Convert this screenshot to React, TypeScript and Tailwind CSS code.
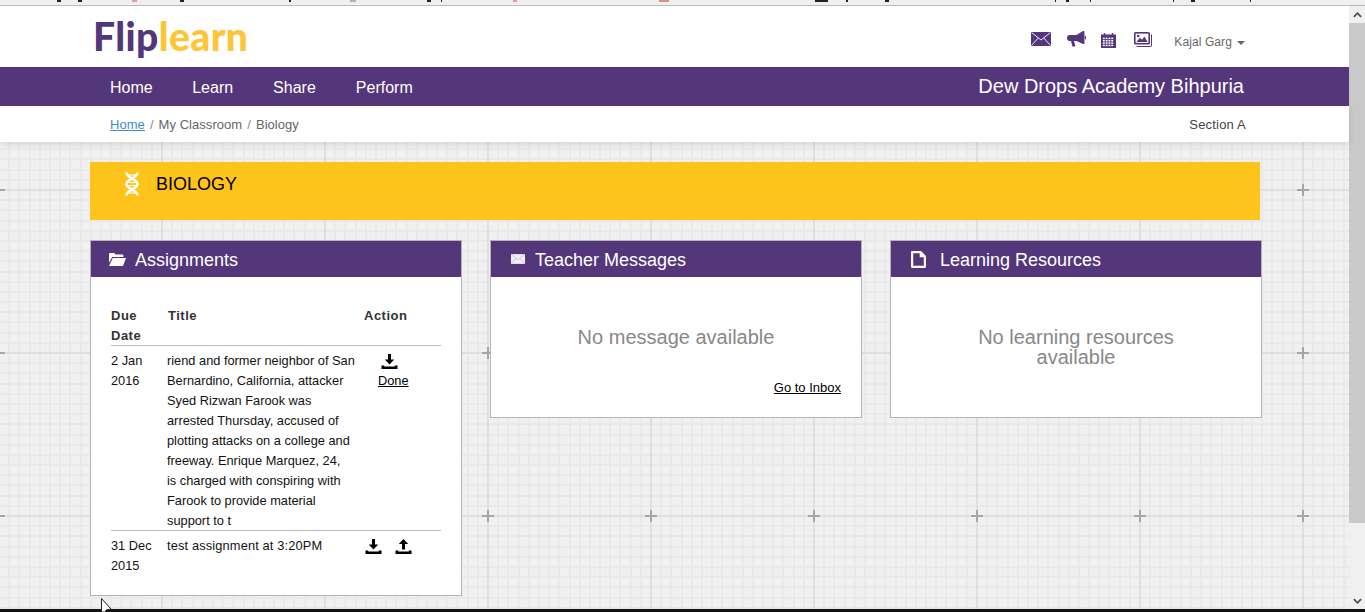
import React from "react";

const minor = Array.from({ length: 16 }, (_, i) => Math.round(i * 10.1875));

function GridBackdrop() {
  return (
    <svg className="absolute inset-0 h-full w-full" aria-hidden="true">
      <defs>
        <pattern id="sheet" width="163" height="163" patternUnits="userSpaceOnUse" x="80" y="-34">
          <rect width="163" height="163" fill="#f0f0f0" />
          {minor.map((m) => (
            <g key={m} fill="#e9e9e9">
              <rect x={(81 + m) % 163} y="0" width="2" height="163" />
              <rect x="0" y={(81 + m) % 163} width="163" height="2" />
            </g>
          ))}
          <rect x="81" y="0" width="2" height="163" fill="#dfdfdf" />
          <rect x="0" y="81" width="163" height="2" fill="#dfdfdf" />
          <rect x="76" y="81" width="12" height="2" fill="#a6a6a6" />
          <rect x="81" y="76" width="2" height="12" fill="#a6a6a6" />
        </pattern>
      </defs>
      <rect width="100%" height="100%" fill="url(#sheet)" />
    </svg>
  );
}

function Envelope({ className, line }: { className?: string; line?: string }) {
  return (
    <svg viewBox="0 0 20 14" className={className} fill="currentColor">
      <rect width="20" height="14" />
      <path d="M0.5 0.500 10 8 19.500 0.500M0.500 13.500 7.300 5.900M19.500 13.500 12.700 5.900" fill="none" stroke={line ?? "#fff"} strokeWidth="0.9" />
    </svg>
  );
}

function Bullhorn() {
  return (
    <svg viewBox="0 0 19 16" className="h-4 w-[19px] text-[#54367a]" fill="currentColor">
      <path d="M16 0h1.4v13H16L9.5 10H7l1.4 5.500H5.400L4 10H2.600C1 10 0 8.900 0 7.300S1 4 2.600 4h6.900z" />
      <rect x="17.800" y="4.800" width="1.200" height="3.600" rx="0.600" />
    </svg>
  );
}

function Calendar() {
  const cells: React.ReactNode[] = [];
  for (let r = 0; r < 4; r++) {
    for (let c = 0; c < 4; c++) {
      cells.push(<rect key={`${r}-${c}`} x={2 + c * 3} y={6 + r * 2.5} width="2" height="1.6" fill="#fff" />);
    }
  }
  return (
    <svg viewBox="0 0 16 17" className="h-4 w-[15px] text-[#54367a]" fill="currentColor">
      <path d="M0 2.500h3V1h1.500v1.500h7V1H13v1.500h3V17H0z" />
      {cells}
    </svg>
  );
}

function Picture() {
  return (
    <svg viewBox="0 0 18 15" className="h-[15px] w-[18px] text-[#54367a]" fill="currentColor">
      <path d="M1.500 0h13A1.500 1.500 0 0 1 16 1.500V11a1.500 1.500 0 0 1-1.500 1.500h-13A1.500 1.500 0 0 1 0 11V1.500A1.500 1.500 0 0 1 1.500 0z" />
      <path d="M1.600 1.600h12.800v9.300H1.600z" fill="#fff" />
      <circle cx="4.200" cy="4" r="1.300" />
      <path d="M2.400 10 6 5.800l2 2 2.400-3.400 3.200 5.600z" />
      <path d="M17 2.500h1V13a2 2 0 0 1-2 2H2.500v-1H16a1 1 0 0 0 1-1z" />
    </svg>
  );
}

function Download() {
  return (
    <svg viewBox="0 0 17 15" className="h-[15px] w-[17px] text-black" fill="currentColor">
      <path d="M7 0h3v5.500h3.200L8.500 10.500 3.800 5.500H7z" />
      <path d="M0.500 11.500h2.700v1h10.600v-1h2.700V15H0.500z" />
    </svg>
  );
}

function Upload() {
  return (
    <svg viewBox="0 0 17 15" className="h-[15px] w-[17px] text-black" fill="currentColor">
      <path d="M8.500 0l4.700 5H10v5.500H7V5H3.800z" />
      <path d="M0.500 11.500h2.700v1h10.600v-1h2.700V15H0.500z" />
    </svg>
  );
}

function FolderOpen() {
  return (
    <svg viewBox="0 0 17 13" className="h-[13px] w-[17px] text-white" fill="currentColor">
      <path d="M0 1.200C0 .5.500 0 1.200 0h4l1.400 1.600h6.600c.7 0 1.200.5 1.200 1.200V4H3.200L0 10z" />
      <path d="M3.800 5H17l-3 8H0z" />
    </svg>
  );
}

function PageIcon() {
  return (
    <svg viewBox="0 0 15 17" className="h-[17px] w-[15px] text-white" fill="currentColor">
      <path
        fillRule="evenodd"
        d="M1.200 0H10l5 5v10.800c0 .7-.5 1.200-1.200 1.200H1.200C.5 17 0 16.500 0 15.800V1.200C0 .5.500 0 1.200 0zM2.200 2.200v12.600h10.600V6.300H8.700V2.200z"
      />
    </svg>
  );
}

function Dna() {
  return (
    <svg viewBox="0 0 16 24" className="h-6 w-4 text-white" fill="none" stroke="currentColor">
      <path d="M2.500 0.500C2.500 6 13.500 7 13.500 12S2.500 18 2.500 23.500" strokeWidth="2.600" />
      <path d="M13.500 0.500C13.500 6 2.500 7 2.500 12s11 6 11 11.500" strokeWidth="2.600" />
      <path d="M4 3h8M4 10.500h8M4 13.500h8M4 21h8" strokeWidth="1" />
    </svg>
  );
}

function Chevron({ up }: { up?: boolean }) {
  return (
    <svg viewBox="0 0 10 6" className="h-[6px] w-[9px] text-[#505050]" fill="none" stroke="currentColor" strokeWidth="2">
      <path d={up ? "M1 5l4-4 4 4" : "M1 1l4 4 4-4"} />
    </svg>
  );
}

function Panel({
  icon,
  title,
  gap,
  height,
  children,
}: {
  icon: React.ReactNode;
  title: string;
  gap: string;
  height: string;
  children: React.ReactNode;
}) {
  return (
    <section className={`border border-[#b4b4b4] bg-white ${height}`}>
      <header className={`flex h-9 items-center bg-[#54367a] pl-[18px] text-[18px] text-white ${gap}`}>
        {icon}
        <span className="pt-[2px]">{title}</span>
      </header>
      {children}
    </section>
  );
}

export default function App() {
  const toolbarMarks: [number, number, string][] = [
    [57, 4, "#222"], [78, 4, "#222"], [132, 5, "#d9a0a0"], [180, 4, "#222"], [289, 2, "#222"],
    [350, 6, "#9dbcb6"], [427, 4, "#222"], [441, 1, "#222"], [513, 4, "#dd9b9b"], [659, 10, "#d89090"],
    [815, 13, "#222"], [846, 2, "#222"], [885, 4, "#222"], [1055, 1, "#222"], [1066, 3, "#222"],
    [1090, 1, "#222"], [1173, 1, "#222"], [1191, 4, "#222"], [1250, 1, "#222"],
  ];
  return (
    <div className="relative flex h-[612px] w-full flex-col overflow-hidden bg-[#f0f0f0] font-['Liberation_Sans',Arial,sans-serif] text-[#333]">
      <div className="h-[6px] shrink-0 border-b border-[#bcbcbc] bg-[#f0f0f0]">
        <svg className="block h-[2px] w-full" aria-hidden="true">
          {toolbarMarks.map(([x, w, c]) => (
            <rect key={x} x={x} y="0" width={w} height="2" fill={c} />
          ))}
        </svg>
      </div>

      <div className="flex min-h-0 flex-1">
        <div className="flex min-w-0 flex-1 flex-col">
          <div className="flex h-[61px] shrink-0 items-start bg-white pl-[93px] pr-[104px]">
            <div className="mt-[7px] font-['Lato',sans-serif] text-[39px] font-black leading-[46px] tracking-[0.4px]">
              <span className="text-[#54367a]">Flip</span>
              <span className="text-[#fec536]">learn</span>
            </div>
            <div className="ml-auto mt-[25px] flex items-start">
              <Envelope className="mt-[1px] h-[14px] w-5 text-[#54367a]" />
              <span className="ml-4 block"><Bullhorn /></span>
              <span className="ml-[15px] mt-[1px] block"><Calendar /></span>
              <span className="ml-[18px] mt-[1px] block"><Picture /></span>
              <span className="ml-[22px] mt-[3px] flex items-center gap-[5px] text-[12px] leading-[17px] tracking-[0.1px] text-[#666]">
                Kajal Garg
                <span className="mt-[1px] h-0 w-0 border-x-4 border-t-4 border-x-transparent border-t-[#666]" />
              </span>
            </div>
          </div>

          <nav className="flex h-[39px] shrink-0 items-center bg-[#54367a] pl-[110px] pr-[105px] text-white">
            <ul className="mt-[2px] flex gap-10 text-[16px]">
              <li>Home</li>
              <li className="-ml-[0.5px]">Learn</li>
              <li>Share</li>
              <li>Perform</li>
            </ul>
            <div className="ml-auto mb-[1px] text-[20px]">Dew Drops Academy Bihpuria</div>
          </nav>

          <div className="relative z-10 flex h-[36px] shrink-0 items-center bg-white pl-[110px] pr-[103px] pt-px text-[13px] tracking-[0.05px] shadow-[0_2px_6px_rgba(0,0,0,0.12)]">
            <a className="text-[#428bca] underline">Home</a>
            <span className="mx-[5px] text-[#888]">/</span>
            <span className="text-[#666]">My Classroom</span>
            <span className="mx-[5px] text-[#888]">/</span>
            <span className="text-[#666]">Biology</span>
            <span className="ml-auto tracking-[0.2px] text-[#444]">Section A</span>
          </div>

          <main className="relative min-h-0 flex-1 overflow-hidden">
            <GridBackdrop />
            <div className="relative pl-[90px] pt-5">
              <div className="flex h-[58px] w-[1170px] items-start bg-[#fec41b] pl-[34px] pt-[10px] text-[18px] text-black">
                <Dna />
                <span className="ml-4 pt-px leading-[22px]">BIOLOGY</span>
              </div>

              <div className="mt-5 grid w-[1172px] grid-cols-[372px_372px_372px] items-start gap-x-[28px]">
                <Panel icon={<FolderOpen />} title="Assignments" gap="gap-[9px]" height="h-[356px]">
                  <div className="px-5 pt-[29px]">
                    <table className="w-[330px] table-fixed border-collapse text-left text-[12.8px] leading-5 text-[#111]">
                      <colgroup>
                        <col className="w-[56px]" />
                        <col className="w-[197px]" />
                        <col />
                      </colgroup>
                      <thead>
                        <tr className="border-b border-[#bbb] align-top text-[13px] font-bold tracking-[0.5px] text-[#333]">
                          <th><div className="-mb-px">Due Date</div></th>
                          <th><div className="-mb-px pl-px">Title</div></th>
                          <th><div className="-mb-px">Action</div></th>
                        </tr>
                      </thead>
                      <tbody>
                        <tr className="border-b border-[#bbb] align-top">
                          <td className="pr-2 pt-[5px]">2 Jan 2016</td>
                          <td className="pr-[6px] pt-[5px]">
                            <div className="-mb-px">
                              riend and former neighbor of San Bernardino, California, attacker Syed Rizwan Farook was
                              arrested Thursday, accused of plotting attacks on a college and freeway. Enrique Marquez, 24,
                              <br />
                              is charged with conspiring with Farook to provide material support to t
                            </div>
                          </td>
                          <td className="pt-[5px]">
                            <div className="flex w-[50px] flex-col items-start pl-[14px]">
                              <span className="ml-[3px] flex h-5 items-center"><Download /></span>
                              <a className="text-black underline">Done</a>
                            </div>
                          </td>
                        </tr>
                        <tr className="align-top">
                          <td className="pr-1 pt-[5px]">31 Dec 2015</td>
                          <td className="pt-[5px] tracking-[0.15px]">test assignment at 3:20PM</td>
                          <td className="pt-[5px]">
                            <div className="flex h-5 items-center gap-[13px] pl-[1px]">
                              <Download />
                              <Upload />
                            </div>
                          </td>
                        </tr>
                      </tbody>
                    </table>
                  </div>
                </Panel>

                <Panel
                  icon={<Envelope className="ml-[2px] h-[10px] w-[14px] text-[#f3eff8]" line="#b9a8cf" />}
                  title="Teacher Messages"
                  gap="gap-[10px]"
                  height="h-[178px]"
                >
                  <div className="px-5 pt-[50px] text-center text-[20px] leading-5 text-[#888]">No message available</div>
                  <div className="mt-[31px] px-5 text-right text-[13px] leading-5 text-black">
                    <a className="underline">Go to Inbox</a>
                  </div>
                </Panel>

                <Panel icon={<PageIcon />} title="Learning Resources" gap="gap-[14px] pl-[20px]" height="h-[178px]">
                  <div className="mx-auto w-[260px] pt-[50px] text-center text-[20px] leading-5 text-[#888]">
                    No learning resources available
                  </div>
                </Panel>
              </div>
            </div>
          </main>
        </div>

        <aside className="flex w-4 shrink-0 flex-col bg-[#f0f0f0]">
          <div className="flex h-[17px] items-center justify-center"><Chevron up /></div>
          <div className="h-[500px] bg-[#c9c9c9]" />
          <div className="mt-auto flex h-[17px] items-center justify-center"><Chevron /></div>
        </aside>
      </div>

      <div className="h-[3px] shrink-0 bg-[#111]" />

      <svg viewBox="0 0 11 14" className="absolute left-[101px] top-[598px] h-[14px] w-[11px]" aria-hidden="true">
        <path d="M0.500 0.500V14H4.500L5 12 10 11z" fill="#fff" stroke="#222" strokeWidth="1" />
      </svg>
    </div>
  );
}
